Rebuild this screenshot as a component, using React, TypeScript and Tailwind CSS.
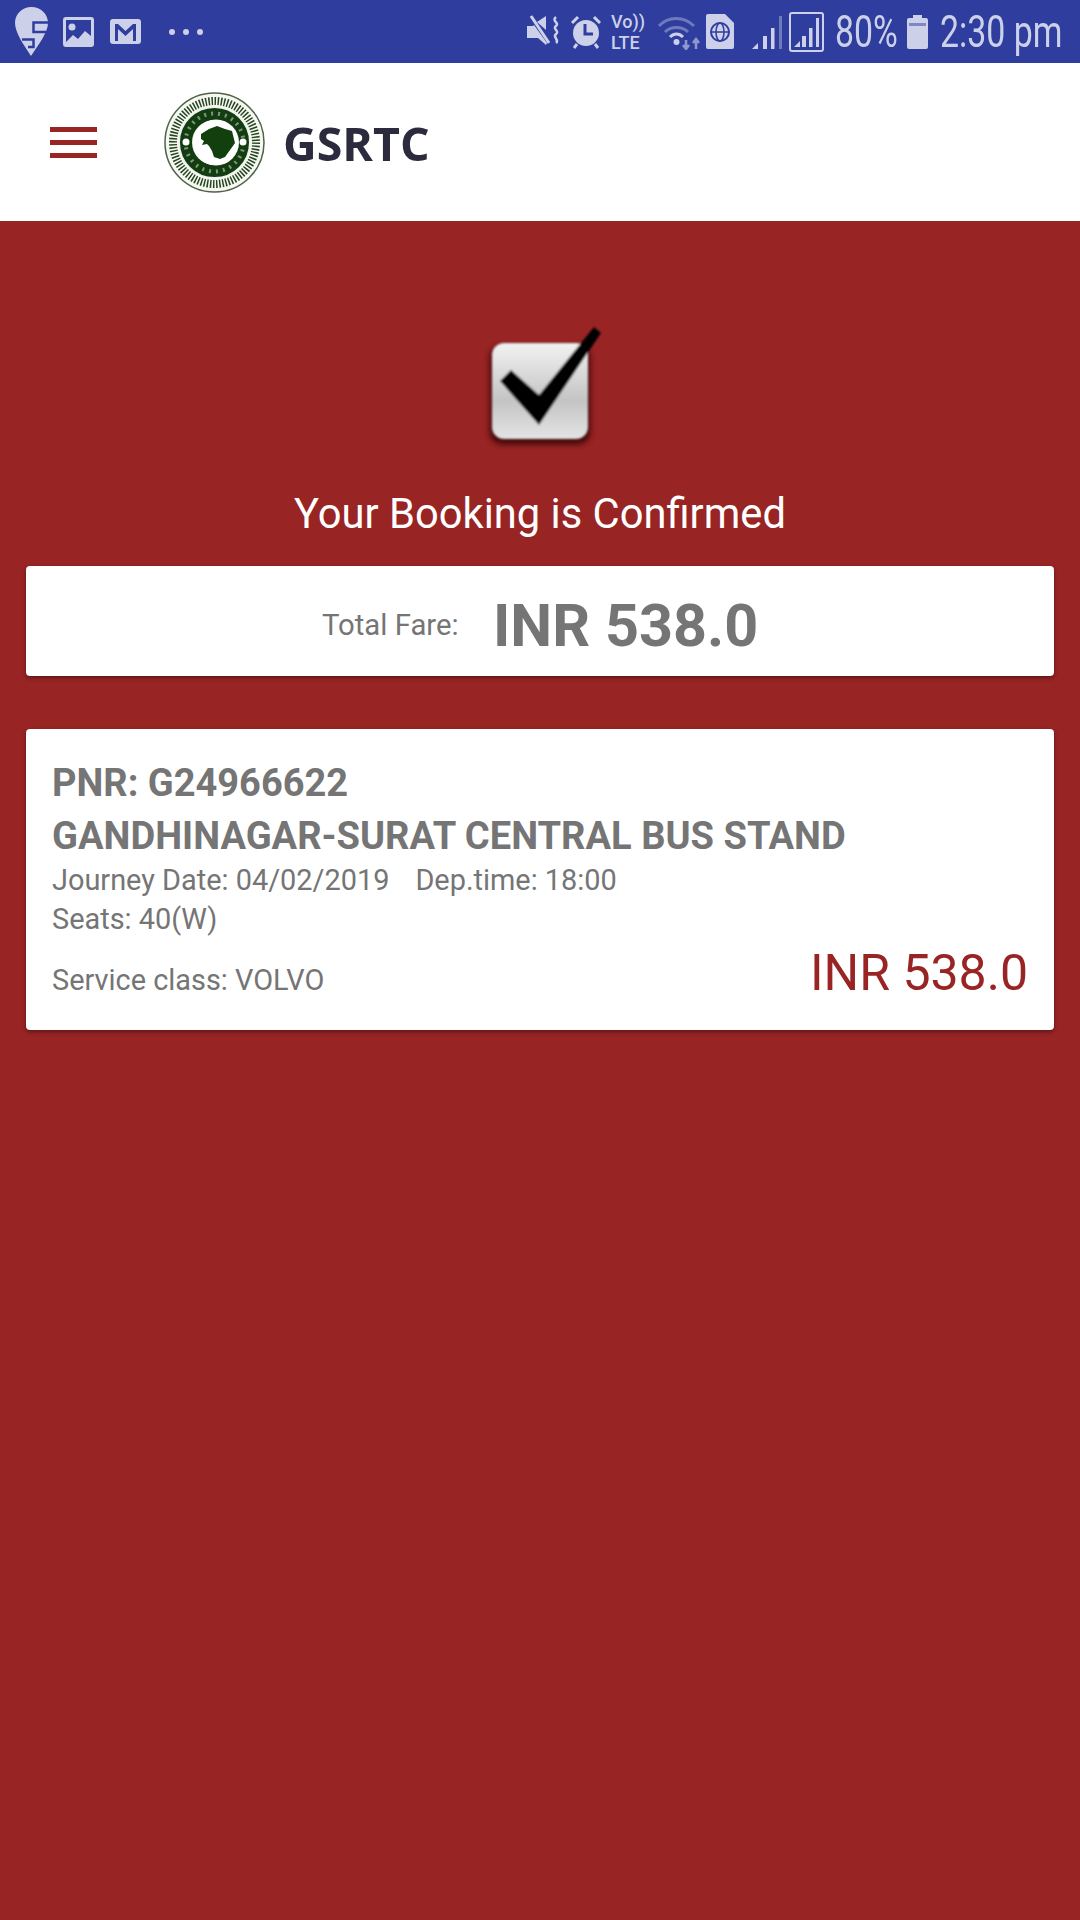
import type { FC } from 'react';

const StatusLeft: FC = () => (
  <div className="flex items-center">
    {/* swiggy style pin */}
    <svg width="33" height="49" viewBox="0 0 33 49" className="ml-[15px]">
      <path d="M16.500 0C7 0 0 7 0 16c0 9 8 21 16 33C24 37 33 25 33 16 33 7 26 0 16.500 0Z" fill="#ccd0e8" />
      <path d="M33 15.500H18.500V25H33M7 32.500h11.500V40H13" fill="none" stroke="#2f3e9e" strokeWidth="2.500" />
    </svg>
    <svg width="31" height="30" viewBox="0 0 31 30" className="ml-[15px]">
      <rect width="31" height="30" rx="3" fill="#ccd0e8" />
      <rect x="3" y="3" width="25" height="24" fill="#2f3e9e" />
      <circle cx="9" cy="10" r="3.500" fill="#ccd0e8" />
      <path d="M3 25l7-7 5 4 7-8 6 5v8H3Z" fill="#ccd0e8" />
    </svg>
    <svg width="31" height="25" viewBox="0 0 31 25" className="ml-[16px]">
      <rect width="31" height="25" rx="3" fill="#ccd0e8" />
      <path d="M5 22V5h3l7.500 7L23 5h3v17h-3V10l-7.500 7L8 10v12Z" fill="#2f3e9e" />
    </svg>
    <div className="ml-[28px] flex gap-[8px]">
      <span className="h-[6px] w-[6px] rounded-full bg-[#ccd0e8]" />
      <span className="h-[6px] w-[6px] rounded-full bg-[#ccd0e8]" />
      <span className="h-[6px] w-[6px] rounded-full bg-[#ccd0e8]" />
    </div>
  </div>
);

const StatusRight: FC = () => (
  <div className="flex items-center">
    <svg width="33" height="34" viewBox="0 0 33 34">
      <path d="M0 11h6l1-1 13 18-1 2-8-7H0Z" fill="#ccd0e8" />
      <path d="M10 7l9-6v14Z" fill="#ccd0e8" />
      <path d="M4 1l18 27" stroke="#ccd0e8" strokeWidth="3" />
      <path d="M29 2c-5 4 4 6 0 9-4 3 4 5 0 8-4 3 4 6 0 9" stroke="#ccd0e8" strokeWidth="2.500" fill="none" />
    </svg>
    <svg width="30" height="35" viewBox="0 0 30 35" className="ml-[11px]">
      <circle cx="15" cy="19" r="13" fill="#ccd0e8" />
      <path d="M14 10v10h8" stroke="#2f3e9e" strokeWidth="3" fill="none" />
      <path d="M1 9l6-6M29 9l-6-6M6 30l-3 4M24 30l3 4" stroke="#ccd0e8" strokeWidth="3" />
    </svg>
    <div className="ml-[10px] flex w-[32px] flex-col font-['Roboto',sans-serif] text-[18px] leading-[21px] font-medium whitespace-nowrap text-[#ccd0e8]">
      <span className="origin-left">Vo))</span>
      <span className="origin-left">LTE</span>
    </div>
    <svg width="43" height="36" viewBox="0 0 43 36" className="ml-[15px]">
      <path d="M1 12c9-10 25-10 35 0M7 18c6-6 17-6 23 0" stroke="#6f7abb" strokeWidth="3" fill="none" />
      <path d="M12 23c4-4 9-4 13 0" stroke="#ccd0e8" strokeWidth="3" fill="none" />
      <circle cx="18.500" cy="28" r="3" fill="#ccd0e8" />
      <path d="M28 26v8M25 31l3 4 3-4" stroke="#8f98cc" strokeWidth="2.500" fill="none" />
      <path d="M38 35v-9M35 29l3-4 3 4" stroke="#8f98cc" strokeWidth="2.500" fill="none" />
    </svg>
    <svg width="28" height="35" viewBox="0 0 28 35" className="ml-[5px]">
      <path d="M2 0h17l9 9v24a2 2 0 0 1-2 2H2a2 2 0 0 1-2-2V2a2 2 0 0 1 2-2Z" fill="#ccd0e8" />
      <circle cx="14" cy="18" r="9" fill="none" stroke="#2f3e9e" strokeWidth="2" />
      <ellipse cx="14" cy="18" rx="4" ry="9" fill="none" stroke="#2f3e9e" strokeWidth="1.500" />
      <path d="M5 18h18" stroke="#2f3e9e" strokeWidth="1.500" />
    </svg>
    <svg width="31" height="36" viewBox="0 0 31 36" className="ml-[18px]">
      <path d="M0 35l6-6v6Z" fill="#ccd0e8" />
      <path d="M11 35V22h4v13ZM19 35V14h3.500v21Z" fill="#ccd0e8" />
      <path d="M27 35V2h3v33Z" fill="#6f7abb" />
    </svg>
    <svg width="35" height="40" viewBox="0 0 35 40" className="ml-[6px]">
      <rect x="1" y="1" width="33" height="38" rx="2" fill="none" stroke="#ccd0e8" strokeWidth="2" />
      <path d="M5 35l6-6v6ZM13 35V24h4v11ZM20 35V16h3.500v19Z" fill="#ccd0e8" />
      <path d="M27 35V6h3v29Z" fill="#ccd0e8" />
    </svg>
    <span className="ml-[11px] w-[59px] origin-left scale-x-[0.77] font-['Roboto',sans-serif] text-[44px] leading-none whitespace-nowrap text-[#ccd0e8]">
      80%
    </span>
    <svg width="21" height="34" viewBox="0 0 21 34" className="ml-[13px]">
      <path d="M6 0h9v3h4a2 2 0 0 1 2 2v27a2 2 0 0 1-2 2H2a2 2 0 0 1-2-2V5a2 2 0 0 1 2-2h4Z" fill="#ccd0e8" />
      <rect x="2" y="8" width="17" height="3" fill="#7d88c4" />
    </svg>
    <span className="mr-[20px] ml-[12px] w-[120px] origin-left scale-x-[0.77] font-['Roboto',sans-serif] text-[44px] leading-none whitespace-nowrap text-[#ccd0e8]">
      2:30 pm
    </span>
  </div>
);

const Emblem: FC = () => (
  <svg width="101" height="101" viewBox="0 0 101 101" className="blur-[0.5px]">
    <circle cx="50.500" cy="50.500" r="49.500" fill="#f6f7f2" stroke="#4f6346" strokeWidth="1.500" />
    <circle cx="50.500" cy="50.500" r="41.500" fill="none" stroke="#24461f" strokeWidth="8" strokeDasharray="1.500 1.600" />
    <circle cx="50.500" cy="50.500" r="36" fill="#eef0ea" />
    <circle cx="50.500" cy="50.500" r="28.500" fill="none" stroke="#123d10" strokeWidth="12" />
    <circle cx="50.500" cy="50.500" r="29" fill="none" stroke="#7f9478" strokeWidth="4" strokeDasharray="2 5" />
    <circle cx="52" cy="50.500" r="23" fill="#fff" />
    <circle cx="22" cy="50" r="3.500" fill="#fff" />
    <circle cx="79" cy="50" r="3.500" fill="#fff" />
    <path d="M37 42l8-5 8-3 8 3 7 2 3 12-5 7-5 7-5 2-6-2-2-6-3-5-2-2-5 1 2-4-3-2Z" fill="#123f0e" />
  </svg>
);

const App: FC = () => {
  return (
    <div className="flex h-[1920px] w-[1080px] flex-col bg-[#992424] font-['Roboto',sans-serif]">
      <div className="flex h-[63px] shrink-0 items-center justify-between bg-[#2f3e9e]">
        <StatusLeft />
        <StatusRight />
      </div>

      <header className="flex h-[158px] shrink-0 items-center bg-white">
        <div className="ml-[50px] flex w-[47px] flex-col gap-[8px]">
          <span className="h-[5px] bg-[#992424]" />
          <span className="h-[5px] bg-[#992424]" />
          <span className="h-[5px] bg-[#992424]" />
        </div>
        <div className="ml-[67px] flex">
          <Emblem />
        </div>
        <span className="ml-[18px] pt-[2px] font-['Open_Sans',sans-serif] text-[46.5px] leading-none font-bold text-[#2b2b3d] blur-[0.7px]">
          GSRTC
        </span>
      </header>

      <main className="flex flex-col items-center px-[26px]">
        <svg width="118" height="122" viewBox="0 0 118 122" className="mt-[104px] overflow-visible">
          <defs>
            <linearGradient id="box" x1="0" y1="0" x2="0" y2="1">
              <stop offset="0" stopColor="#f2f2f2" />
              <stop offset="0.6" stopColor="#c4c4c4" />
              <stop offset="1" stopColor="#e4e4e4" />
            </linearGradient>
            <filter id="soft">
              <feGaussianBlur stdDeviation="3" />
            </filter>
            <filter id="edge">
              <feGaussianBlur stdDeviation="1" />
            </filter>
          </defs>
          <rect x="9" y="21" width="100" height="98" rx="12" fill="#2a0505" opacity="0.85" filter="url(#soft)" />
          <g filter="url(#edge)">
            <rect x="11" y="18" width="96" height="96" rx="12" fill="url(#box)" />
            <path d="M30 45l-11 11 39 44 62-92-7-6-55 68Z" fill="#000" />
          </g>
        </svg>
        <h1 className="mt-[39px] text-[41.7px] leading-[56px] text-white">Your Booking is Confirmed</h1>

        <section className="mt-[24px] flex h-[110px] w-full items-center rounded-[4px] bg-white pt-[9px] pl-[296px] shadow-[0_2px_4px_rgba(0,0,0,0.4)]">
          <span className="w-[171px] text-[29.300px] text-[#757575]">Total Fare:</span>
          <span className="text-[59.3px] leading-none font-bold text-[#757575]">INR 538.0</span>
        </section>

        <section className="mt-[53px] flex h-[301px] w-full flex-col rounded-[4px] bg-white px-[26px] pt-[28px] shadow-[0_2px_4px_rgba(0,0,0,0.4)]">
          <p className="text-[38px] leading-[53px] font-bold text-[#757575]">PNR: G24966622</p>
          <p className="text-[38.1px] leading-[52px] font-bold text-[#757575]">GANDHINAGAR-SURAT CENTRAL BUS STAND</p>
          <p className="-mt-[1px] flex gap-[26px] text-[28.9px] leading-[39px] text-[#757575]">
            <span>Journey Date: 04/02/2019</span>
            <span>Dep.time: 18:00</span>
          </p>
          <p className="text-[28.9px] leading-[39px] text-[#757575]">Seats: 40(W)</p>
          <div className="mt-[8px] flex items-end justify-between">
            <span className="text-[28.9px] leading-[39px] text-[#757575]">Service class: VOLVO</span>
            <span className="text-[50px] leading-[53px] text-[#992424]">INR 538.0</span>
          </div>
        </section>
      </main>
    </div>
  );
};

export default App;
